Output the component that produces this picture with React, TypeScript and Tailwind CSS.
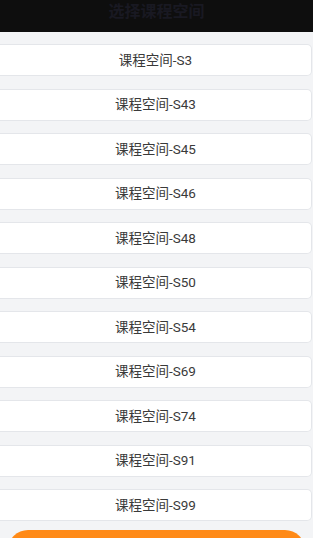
import React from 'react';

const spaces = ['S3', 'S43', 'S45', 'S46', 'S48', 'S50', 'S54', 'S69', 'S74', 'S91', 'S99'];

export default function App() {
  return (
    <div
      className="w-[313px] h-[538px] overflow-hidden bg-[#f3f4f6] flex flex-col"
      style={{ fontFamily: 'Roboto, "Noto Sans CJK SC", sans-serif' }}
    >
      {/* header */}
      <div className="h-8 shrink-0 bg-[#0e0e0e] flex justify-center pt-[2px]">
        <h1 className="text-[16px] leading-5 font-bold text-[#191922]">选择课程空间</h1>
      </div>

      {/* list */}
      <div className="flex flex-col gap-[12.5px] pt-3 mr-px">
        {spaces.map((s) => (
          <button
            key={s}
            className="h-8 shrink-0 bg-white border border-[#e4e6ea] border-l-0 rounded-r-[5px] flex items-center justify-center text-[13.5px] text-[#3a3a3a]"
          >
            课程空间-{s}
          </button>
        ))}
      </div>

      <div className="px-2 pt-[9px]">
        <button className="w-full h-10 rounded-full bg-[#ff8a17]" />
      </div>
    </div>
  );
}
